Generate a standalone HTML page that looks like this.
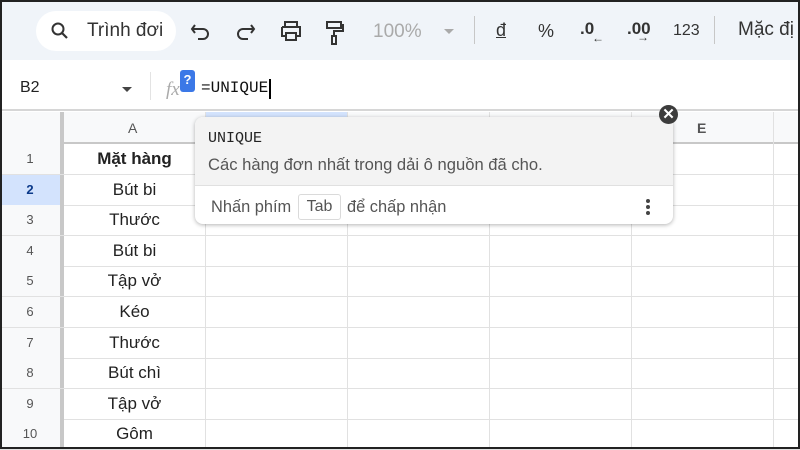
<!DOCTYPE html>
<html><head><meta charset="utf-8"><style>
*{box-sizing:border-box;margin:0;padding:0}
body{width:800px;height:449px;overflow:hidden;background:#fff;font-family:"Liberation Sans",Arial,sans-serif;position:relative}
.frame{position:absolute;left:0;top:0;width:800px;height:449px;border:2px solid #222;z-index:50}
.tb{position:absolute;left:0;top:0;width:800px;height:60px;background:#f0f4f9}
.pill{position:absolute;left:36px;top:11px;width:140px;height:40px;background:#fff;border-radius:20px}
.t{position:absolute;white-space:nowrap;color:#444}
.fb{position:absolute;left:0;top:60px;width:800px;height:51px;background:#fff;border-bottom:2px solid #d6d6d6}
.r{position:absolute;left:0;width:800px;height:31px;border-bottom:1px solid #e1e1e1}
.rh{position:absolute;left:0;top:0;width:64px;height:30px;border-right:4px solid #c8c8c8;background:#f8f9fa;color:#555;font-size:13px;text-align:center;line-height:30px}
.a{position:absolute;left:64px;top:0;width:141px;height:30px;font-size:17px;color:#222;text-align:center;line-height:30px}
.vl{position:absolute;top:112px;width:1px;height:337px;background:#e1e1e1}
.pop{position:absolute;left:195px;top:117px;width:478px;height:107px;background:#fff;border-radius:8px;box-shadow:0 1px 4px rgba(0,0,0,.3);overflow:hidden}
</style></head><body>
<div class="tb">
 <div class="pill"></div>
 <svg style="position:absolute;left:50px;top:21px" width="20" height="20" viewBox="0 0 20 20"><circle cx="8" cy="8" r="5.5" fill="none" stroke="#333" stroke-width="2"/><path d="M12 12l5 5" stroke="#333" stroke-width="2.2"/></svg>
 <div class="t" style="left:87px;top:20px;font-size:19px;color:#333">Trình đơi</div>
 <svg style="position:absolute;left:190px;top:22px" width="22" height="18" viewBox="0 0 22 18"><path d="M5 3L2 7l3 4M2 7h11a5 5 0 010 10H8" fill="none" stroke="#333" stroke-width="2"/></svg>
 <svg style="position:absolute;left:234px;top:22px" width="22" height="18" viewBox="0 0 22 18"><path d="M17 3l3 4-3 4M20 7H9a5 5 0 000 10h5" fill="none" stroke="#333" stroke-width="2"/></svg>
 <svg style="position:absolute;left:279px;top:20px" width="24" height="22" viewBox="0 0 24 22"><path d="M6 6V2h12v4M3 7h18v9h-3M6 16H3V7" fill="none" stroke="#333" stroke-width="2"/><rect x="7" y="13" width="10" height="7" fill="none" stroke="#333" stroke-width="2"/></svg>
 <svg style="position:absolute;left:324px;top:20px" width="22" height="26" viewBox="0 0 22 26"><rect x="3" y="2" width="14" height="6" fill="none" stroke="#333" stroke-width="2"/><path d="M17 5h2v6h-9v5" fill="none" stroke="#333" stroke-width="2"/><rect x="8" y="16" width="4" height="8" fill="none" stroke="#333" stroke-width="2"/></svg>
 <div class="t" style="left:373px;top:21px;font-size:19px;color:#aaa">100%</div>
 <div style="position:absolute;left:444px;top:29px;border:5px solid transparent;border-top:5px solid #aaa"></div>
 <div style="position:absolute;left:474px;top:16px;width:1px;height:28px;background:#c7c7c7"></div>
 <div class="t" style="left:496px;top:20px;font-size:18px;color:#333;text-decoration:underline">đ</div>
 <div class="t" style="left:538px;top:21px;font-size:18px;color:#333">%</div>
 <div class="t" style="left:580px;top:19px;font-size:17px;color:#333;font-weight:bold">.0</div>
 <div class="t" style="left:592px;top:31px;font-size:12px;color:#333">←</div>
 <div class="t" style="left:627px;top:19px;font-size:17px;color:#333;font-weight:bold">.00</div>
 <div class="t" style="left:637px;top:30px;font-size:12px;color:#333">→</div>
 <div class="t" style="left:673px;top:22px;font-size:16px;color:#333">123</div>
 <div style="position:absolute;left:714px;top:16px;width:1px;height:28px;background:#c7c7c7"></div>
 <div class="t" style="left:738px;top:19px;font-size:19px;color:#333">Mặc đị</div>
</div>
<div class="fb">
 <div class="t" style="left:20px;top:19px;font-size:16px;color:#222">B2</div>
 <div style="position:absolute;left:122px;top:27px;border:5px solid transparent;border-top:5px solid #444"></div>
 <div style="position:absolute;left:150px;top:12px;width:1px;height:28px;background:#e3e3e3"></div>
 <div class="t" style="left:166px;top:19px;font-size:19px;font-style:italic;color:#aaa;font-family:'Liberation Serif',serif">fx</div>
 <div style="position:absolute;left:180px;top:10px;width:15px;height:22px;background:#3b78e7;border-radius:3px;color:#fff;font-size:13px;font-weight:bold;text-align:center;line-height:20px">?</div>
 <div class="t" style="left:201px;top:19px;font-size:16px;color:#111;font-family:'Liberation Mono',monospace">=UNIQUE</div>
 <div style="position:absolute;left:269px;top:19px;width:2px;height:20px;background:#000"></div>
</div>

<!-- header row -->
<div style="position:absolute;left:0;top:112px;width:800px;height:32px;background:#f8f9fa;border-bottom:2px solid #c8c8c8"></div>
<div style="position:absolute;left:0;top:112px;width:64px;height:32px;border-right:4px solid #c8c8c8;background:#f8f9fa"></div>
<div style="position:absolute;left:205px;top:112px;width:142px;height:30px;background:#d3e3fd"></div>
<div class="t" style="left:128px;top:120px;font-size:14px;color:#555">A</div>
<div class="t" style="left:697px;top:120px;font-size:14px;color:#555;font-weight:bold">E</div>

<div class="r" style="top:144px"><div class="rh">1</div><div class="a" style="font-weight:bold">Mặt hàng</div></div>
<div class="r" style="top:175px"><div class="rh" style="background:#d3e3fd;color:#0b3a8a;font-weight:bold">2</div><div class="a">Bút bi</div></div>
<div class="r" style="top:205px"><div class="rh">3</div><div class="a">Thước</div></div>
<div class="r" style="top:236px"><div class="rh">4</div><div class="a">Bút bi</div></div>
<div class="r" style="top:266px"><div class="rh">5</div><div class="a">Tập vở</div></div>
<div class="r" style="top:297px"><div class="rh">6</div><div class="a">Kéo</div></div>
<div class="r" style="top:328px"><div class="rh">7</div><div class="a">Thước</div></div>
<div class="r" style="top:358px"><div class="rh">8</div><div class="a">Bút chì</div></div>
<div class="r" style="top:389px"><div class="rh">9</div><div class="a">Tập vở</div></div>
<div class="r" style="top:419px"><div class="rh">10</div><div class="a">Gôm</div></div>

<div class="vl" style="left:205px"></div>
<div class="vl" style="left:347px"></div>
<div class="vl" style="left:489px"></div>
<div class="vl" style="left:631px"></div>
<div class="vl" style="left:773px"></div>

<div style="position:absolute;left:205px;top:174px;width:143px;height:32px;border:2px solid #1a73e8"></div>
<div class="pop">
 <div style="position:absolute;left:0;top:0;width:478px;height:69px;background:#f3f3f3;border-bottom:1px solid #e0e0e0"></div>
 <div class="t" style="left:13px;top:13px;font-size:15px;color:#222;font-family:'Liberation Mono',monospace">UNIQUE</div>
 <div class="t" style="left:13px;top:38px;font-size:16.6px;color:#555">Các hàng đơn nhất trong dải ô nguồn đã cho.</div>
 <div class="t" style="left:16px;top:81px;font-size:16.4px;color:#555">Nhấn phím</div>
 <div style="position:absolute;left:103px;top:77px;width:43px;height:26px;border:1px solid #dadada;border-radius:3px;font-size:16px;color:#555;text-align:center;line-height:24px">Tab</div>
 <div class="t" style="left:152px;top:81px;font-size:16.4px;color:#555">để chấp nhận</div>
 <div style="position:absolute;left:451px;top:82px;width:4px;height:4px;border-radius:2px;background:#444;box-shadow:0 6px 0 #444,0 12px 0 #444"></div>
</div>
<div style="position:absolute;left:659px;top:105px;width:19px;height:19px;border-radius:50%;background:#3c3c3c;color:#fff;font-size:15px;font-weight:bold;text-align:center;line-height:19px">✕</div>
<div class="frame"></div>
</body></html>
